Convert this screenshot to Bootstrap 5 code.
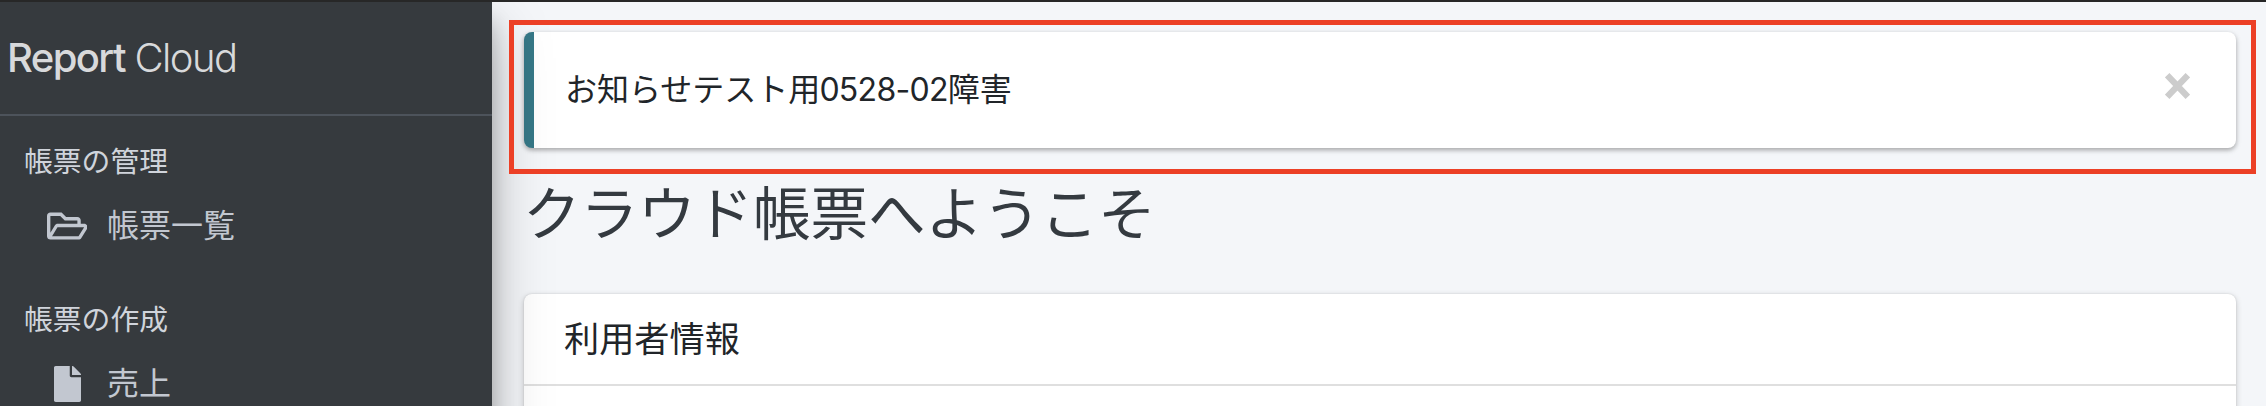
<!DOCTYPE html>
<html lang="ja">
<head>
<meta charset="utf-8">
<title>Report Cloud</title>
<link rel="stylesheet" href="https://cdn.jsdelivr.net/npm/bootstrap@5.3.0/dist/css/bootstrap.min.css">
<style>
html, body { height: 406px; overflow: hidden; }
body { font-family: Inter, "Noto Sans CJK JP", sans-serif; font-size: 32px; line-height: 48px; color: #212529; background: #f4f6f9; }
.app-shell { height: 406px; border-top: 2px solid #272727; overflow: hidden; }
.side-menu { width: 492px; height: 900px; background: #363a3e; color: #c2c7d0; position: relative; z-index: 2;
  box-shadow: 0 28px 56px rgba(0,0,0,.25), 0 20px 20px rgba(0,0,0,.22); }
.brand-line { height: 114px; padding: 32px 7px 0; border-bottom: 2px solid #4d535b; font-size: 40px; font-weight: 300; letter-spacing: -1.6px; color: #d8d9db; }
.brand-line b { font-weight: 500; }
.menu-title { font-size: 28.8px; line-height: 44px; padding-left: 24px; margin-top: 24px; color: #d0d4db; }
.menu-link + .menu-title { margin-top: 48px; }
.menu-link { height: 48px; margin-top: 18px; padding-left: 44px; color: #c2c7d0; }
.menu-icon { width: 46px; margin-right: 17px; }
.main-pane { padding: 30px 30px 0 32px; }
.notice { height: 116px; border: 0; border-left: 10px solid #367887; border-radius: 8px; padding: 0 46px 0 31px;
  box-shadow: 0 2px 6px rgba(0,0,0,.12), 0 2px 4px rgba(0,0,0,.24); }
.notice-code { letter-spacing: -.7px; margin-left: -1px; }
.notice-frame { inset: -12px -20px -26px -15px; border: 5px solid #ec4026; z-index: 3; }
.page-title { font-size: 57.6px; line-height: 68px; font-weight: 400; letter-spacing: -.1px; color: #343a40; margin: 32px 0 46px -1px; }
.info-card { border: 0; border-radius: 8px; height: 300px; box-shadow: 0 0 2px rgba(0,0,0,.125), 0 2px 6px rgba(0,0,0,.2); }
.info-head { height: 92px; background: none; border-bottom: 2px solid #dfdfdf; padding: 0 40px; font-size: 35.2px; }
</style>
</head>
<body>
<div class="app-shell d-flex">
  <nav class="side-menu flex-shrink-0">
    <div class="brand-line"><b>Report</b> Cloud</div>
    <div class="menu-title">帳票の管理</div>
    <a class="menu-link d-flex align-items-center text-decoration-none" href="#">
      <span class="menu-icon d-flex justify-content-center"><svg width="40.5" height="36" viewBox="0 0 576 512" fill="currentColor"><path d="M527.9 224H480v-48c0-26.5-21.5-48-48-48H272l-64-64H48C21.5 64 0 85.5 0 112v288c0 26.5 21.5 48 48 48h400c16.5 0 31.9-8.5 40.7-22.6l79.9-128c20-31.9-3-73.4-40.7-73.4zM48 118c0-3.3 2.7-6 6-6h134.1l64 64H426c3.3 0 6 2.7 6 6v42H152c-16.8 0-32.4 8.8-41.1 23.2L48 351.4zm400 282H72l77.2-128H528z"/></svg></span>
      <span>帳票一覧</span>
    </a>
    <div class="menu-title">帳票の作成</div>
    <a class="menu-link d-flex align-items-center text-decoration-none" href="#">
      <span class="menu-icon d-flex justify-content-center"><svg width="27" height="36" viewBox="0 0 384 512" fill="currentColor"><path d="M224 136V0H24C10.7 0 0 10.7 0 24v464c0 13.3 10.7 24 24 24h336c13.3 0 24-10.7 24-24V160H248c-13.3 0-24-10.7-24-24zm160-14.1v6.1H256V0h6.1c6.4 0 12.5 2.5 17 7l97.9 98c4.5 4.5 7 10.6 7 16.9z"/></svg></span>
      <span>売上</span>
    </a>
  </nav>
  <main class="main-pane flex-grow-1">
    <div class="position-relative">
      <div class="notice card flex-row align-items-center justify-content-between">
        <span>お知らせテスト用<span class="notice-code">0528-02</span>障害</span>
        <svg width="25" height="26" viewBox="0 0 25 26" style="margin-bottom:8px"><path d="M2.2 2.2 22.8 23.8M22.8 2.2 2.2 23.8" stroke="#ccc" stroke-width="6.2"/></svg>
      </div>
      <div class="notice-frame position-absolute"></div>
    </div>
    <h1 class="page-title">クラウド帳票へようこそ</h1>
    <section class="info-card card">
      <div class="info-head card-header d-flex align-items-center">利用者情報</div>
    </section>
  </main>
</div>
<script src="https://cdn.jsdelivr.net/npm/bootstrap@5.3.0/dist/js/bootstrap.bundle.min.js"></script>
</body>
</html>
